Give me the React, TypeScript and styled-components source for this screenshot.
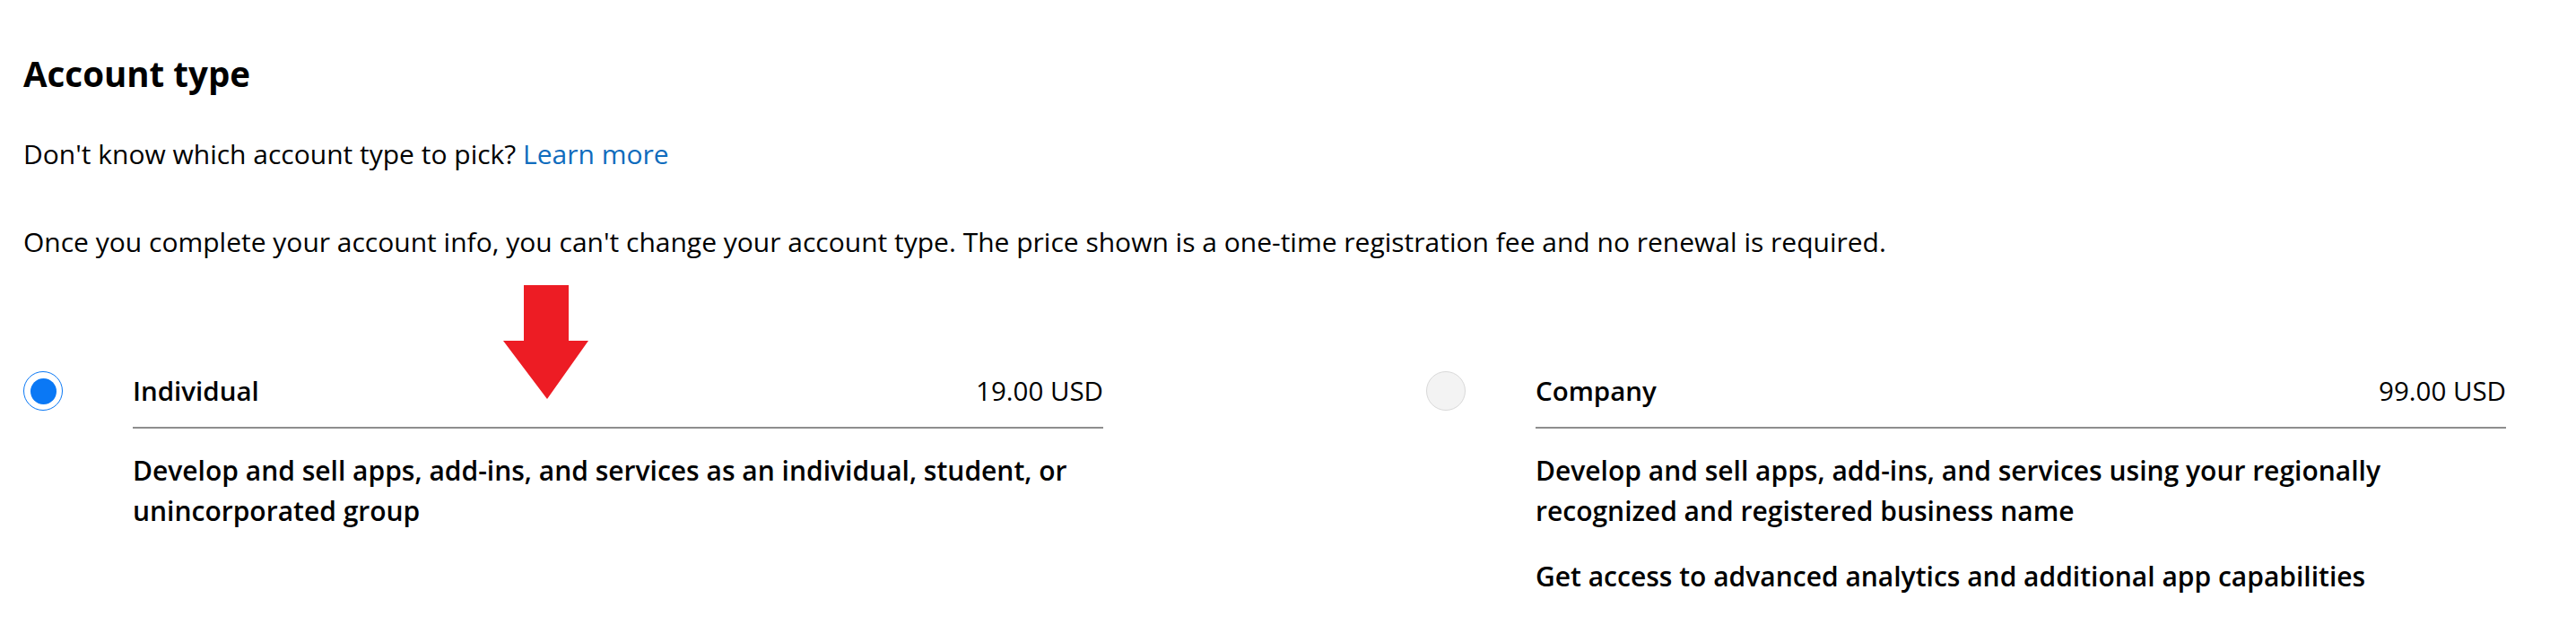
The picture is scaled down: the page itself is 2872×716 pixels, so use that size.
import styled, { createGlobalStyle } from "styled-components";

const GlobalStyle = createGlobalStyle`
  body {
    margin: 0;
    background: #ffffff;
    font-family: "Open Sans", "Noto Sans", "Liberation Sans", sans-serif;
    color: #000000;
  }
`;

const Page = styled.div`
  position: relative;
  padding: 58px 0 40px 26px;
  min-height: 716px;
  box-sizing: border-box;
`;

const Title = styled.h2`
  margin: 0;
  font-size: 38.5px;
  line-height: 48px;
  font-weight: 700;
`;

const Text = styled.p<{ top: number }>`
  margin: ${props => props.top}px 0 0 0;
  font-size: 30px;
  line-height: 44px;
  font-weight: 400;
  white-space: nowrap;
`;

const Link = styled.a`
  color: #0f6cbd;
  text-decoration: none;
`;

const Options = styled.div`
  display: grid;
  grid-template-columns: 1204px 1204px;
  column-gap: 360px;
  margin-top: 122px;
`;

const Option = styled.div`
  display: flex;
  gap: 78px;
  align-items: flex-start;
`;

const Radio = styled.span<{ checked: boolean }>`
  flex: none;
  width: 44px;
  height: 44px;
  box-sizing: border-box;
  border-radius: 50%;
  display: grid;
  place-items: center;
  background: ${props => (props.checked ? "#ffffff" : "#f3f3f3")};
  border: ${props => (props.checked ? "1.5px solid #0a78f5" : "1px solid #d9d9d9")};
  &::after {
    content: "";
    width: ${props => (props.checked ? "29px" : "0")};
    height: ${props => (props.checked ? "29px" : "0")};
    border-radius: 50%;
    background: #0a78f5;
  }
`;

const Body = styled.div`
  flex: 1;
`;

const Header = styled.div`
  display: flex;
  justify-content: space-between;
  align-items: center;
  height: 44px;
  padding-bottom: 18px;
  border-bottom: 2px solid #8e8e8e;
  font-size: 29.5px;
  line-height: 44px;
`;

const Label = styled.span`
  font-weight: 600;
`;

const Price = styled.span`
  font-weight: 500;
`;

const Desc = styled.p<{ top: number }>`
  margin: ${props => props.top}px 0 0 0;
  font-size: 30px;
  line-height: 45px;
  font-weight: 600;
`;

const Arrow = styled.svg`
  position: absolute;
  left: 561px;
  top: 318px;
`;

const options = [
  {
    name: "Individual",
    price: "19.00 USD",
    checked: true,
    lines: [
      "Develop and sell apps, add-ins, and services as an individual, student, or unincorporated group",
    ],
  },
  {
    name: "Company",
    price: "99.00 USD",
    checked: false,
    lines: [
      "Develop and sell apps, add-ins, and services using your regionally recognized and registered business name",
      "Get access to advanced analytics and additional app capabilities",
    ],
  },
];

function App() {
  return (
    <Page>
      <GlobalStyle />
      <Title>Account type</Title>
      <Text top={44}>
        Don't know which account type to pick? <Link href="#">Learn more</Link>
      </Text>
      <Text top={54}>
        Once you complete your account info, you can't change your account type. The price shown is a
        one-time registration fee and no renewal is required.
      </Text>
      <Options>
        {options.map(opt => (
          <Option key={opt.name}>
            <Radio checked={opt.checked} />
            <Body>
              <Header>
                <Label>{opt.name}</Label>
                <Price>{opt.price}</Price>
              </Header>
              {opt.lines.map((line, i) => (
                <Desc key={i} top={i === 0 ? 24 : 28}>
                  {line}
                </Desc>
              ))}
            </Body>
          </Option>
        ))}
      </Options>
      <Arrow width="95" height="127" viewBox="0 0 95 127">
        <polygon points="23,0 73,0 73,62 95,62 49,127 0,62 23,62" fill="#ed1c24" />
      </Arrow>
    </Page>
  );
}

export default App;
